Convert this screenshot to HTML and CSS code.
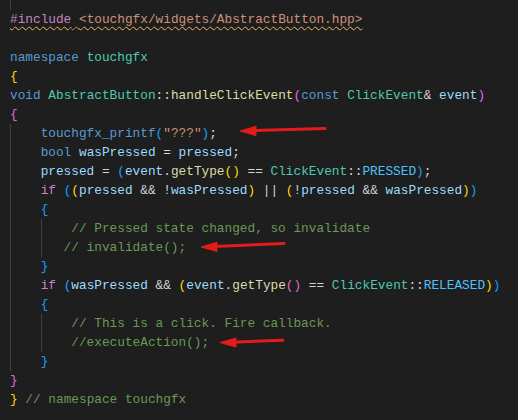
FILE: index.html
```html
<!DOCTYPE html>
<html lang="en">
<head>
<meta charset="utf-8">
<title>AbstractButton.cpp</title>
<link rel="stylesheet" href="styles.css">
</head>
<body>
<div class="editor">
  <div class="code">
    <div class="line top"><span class="g"></span></div>
    <div class="line squig"><span class="pp">#include</span> <span class="str">&lt;touchgfx/widgets/AbstractButton.hpp&gt;</span></div>
    <div class="line"></div>
    <div class="line"><span class="kw">namespace</span> <span class="ty">touchgfx</span></div>
    <div class="line"><span class="b1">{</span></div>
    <div class="line"><span class="kw">void</span> <span class="ty">AbstractButton</span>::<span class="fn">handleClickEvent</span><span class="b2">(</span><span class="kw">const</span> <span class="ty">ClickEvent</span>&amp; <span class="var">event</span><span class="b2">)</span></div>
    <div class="line"><span class="b2">{</span></div>
    <div class="line"><span class="g"></span><span class="kw">touchgfx_printf</span><span class="b3">(</span><span class="str">"???"</span><span class="b3">)</span>;</div>
    <div class="line"><span class="g"></span><span class="kw">bool</span> <span class="var">wasPressed</span> = <span class="var">pressed</span>;</div>
    <div class="line"><span class="g"></span><span class="var">pressed</span> = <span class="b3">(</span><span class="var">event</span>.<span class="fn">getType</span><span class="b1">()</span> == <span class="ty">ClickEvent</span>::<span class="en">PRESSED</span><span class="b3">)</span>;</div>
    <div class="line"><span class="g"></span><span class="ctl">if</span> <span class="b3">(</span><span class="b1">(</span><span class="var">pressed</span> &amp;&amp; !<span class="var">wasPressed</span><span class="b1">)</span> || <span class="b1">(</span>!<span class="var">pressed</span> &amp;&amp; <span class="var">wasPressed</span><span class="b1">)</span><span class="b3">)</span></div>
    <div class="line"><span class="g"></span><span class="b3">{</span></div>
    <div class="line"><span class="g"></span><span class="g"></span><span class="cm">// Pressed state changed, so invalidate</span></div>
    <div class="line"><span class="g"></span><span class="g g3"></span><span class="cm">// invalidate();</span></div>
    <div class="line"><span class="g"></span><span class="b3">}</span></div>
    <div class="line"><span class="g"></span><span class="ctl">if</span> <span class="b3">(</span><span class="var">wasPressed</span> &amp;&amp; <span class="b1">(</span><span class="var">event</span>.<span class="fn">getType</span><span class="b2">()</span> == <span class="ty">ClickEvent</span>::<span class="en">RELEASED</span><span class="b1">)</span><span class="b3">)</span></div>
    <div class="line"><span class="g"></span><span class="b3">{</span></div>
    <div class="line"><span class="g"></span><span class="g"></span><span class="cm">// This is a click. Fire callback.</span></div>
    <div class="line"><span class="g"></span><span class="g"></span><span class="cm">//executeAction();</span></div>
    <div class="line"><span class="g"></span><span class="b3">}</span></div>
    <div class="line"><span class="b2">}</span></div>
    <div class="line"><span class="b1">}</span> <span class="cm">// namespace touchgfx</span></div>
  </div>
  <svg class="arrows" width="518" height="420" viewBox="0 0 518 420" aria-hidden="true">
    <g class="arrow">
      <line x1="252" y1="130.6" x2="325" y2="128.6"/>
      <polygon points="240,131 256,126.2 256,135.6"/>
    </g>
    <g class="arrow">
      <line x1="213" y1="246.6" x2="284" y2="243.6"/>
      <polygon points="201,247 217,242.3 217,251.4"/>
    </g>
    <g class="arrow">
      <line x1="232" y1="342.2" x2="283" y2="340.2"/>
      <polygon points="220,342.6 236,338 236,347"/>
    </g>
  </svg>
</div>
</body>
</html>
```

FILE: styles.css
```css
html, body {
  margin: 0;
  padding: 0;
  background: #1e1e1e;
}

.editor {
  position: relative;
  width: 518px;
  height: 420px;
  overflow: hidden;
  background: #1e1e1e;
}

.code {
  padding: 10px 0 0 10px;
  font-family: "Liberation Mono", "DejaVu Sans Mono", monospace;
  font-size: 12.77px;
  color: #d4d4d4;
}

.line {
  height: 19px;
  line-height: 19px;
  white-space: pre;
}

.line.top {
  margin-top: -19px;
}

.g {
  display: inline-block;
  width: 4ch;
  height: 19px;
  vertical-align: top;
  box-shadow: inset 1px 0 #404040;
}

.g.g3 {
  width: 3ch;
}

.squig {
  text-decoration: underline wavy #b88f4f;
  text-decoration-thickness: 1px;
  text-underline-offset: 3px;
}

.squig span {
  text-decoration: inherit;
}

.pp { color: #c586c0; }
.ctl { color: #c586c0; }
.kw { color: #569cd6; }
.ty { color: #4ec9b0; }
.fn { color: #dcdcaa; }
.var { color: #9cdcfe; }
.str { color: #ce9178; }
.cm { color: #6a9955; }
.en { color: #4fc1ff; }
.b1 { color: #ffd700; }
.b2 { color: #da70d6; }
.b3 { color: #179fff; }

.arrows {
  position: absolute;
  top: 0;
  left: 0;
  pointer-events: none;
}

.arrow line {
  stroke: #e41b1b;
  stroke-width: 3;
  stroke-linecap: round;
}

.arrow polygon {
  fill: #e41b1b;
  stroke: #e41b1b;
  stroke-width: 1;
  stroke-linejoin: round;
}
```
